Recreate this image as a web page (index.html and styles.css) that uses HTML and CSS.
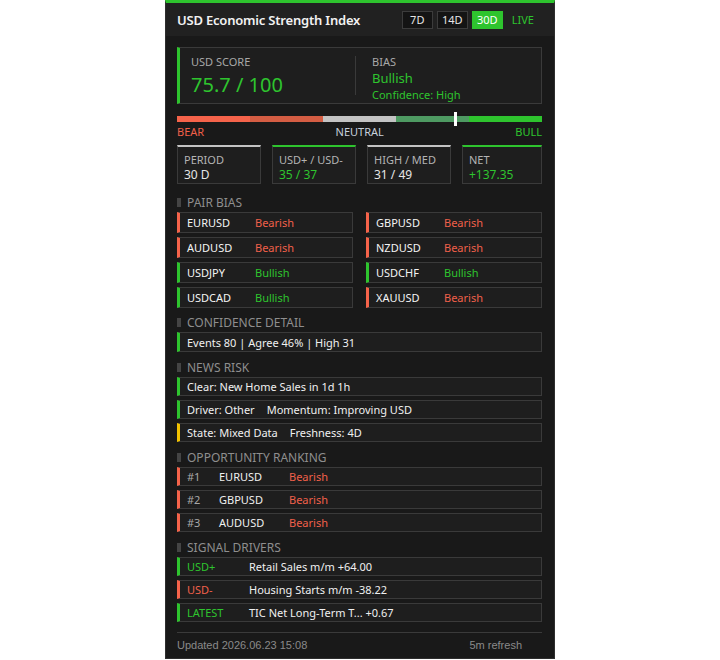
FILE: index.html
```html
<!DOCTYPE html>
<html lang="en">
<head>
    <meta charset="UTF-8">
    <meta name="viewport" content="width=device-width, initial-scale=1.0">
    <title>USD Economic Strength Index</title>
    <link rel="stylesheet" href="styles.css">
</head>
<body>
    <div class="panel">
        <div class="header">
            <div class="title">USD Economic Strength Index</div>
            <div class="tabs">
                <span class="tab">7D</span>
                <span class="tab">14D</span>
                <span class="tab active">30D</span>
                <span class="live">LIVE</span>
            </div>
        </div>

        <div class="content">
            <div class="score-box">
                <div class="score-left">
                    <div class="label">USD SCORE</div>
                    <div class="score">75.7 / 100</div>
                </div>
                <div class="divider"></div>
                <div class="score-right">
                    <div class="label">BIAS</div>
                    <div class="bias">Bullish</div>
                    <div class="conf">Confidence: High</div>
                </div>
            </div>

            <div class="meter">
                <div class="seg s1"></div>
                <div class="seg s2"></div>
                <div class="seg s3"></div>
                <div class="seg s4"></div>
                <div class="seg s5"></div>
                <div class="marker" style="left: 76%"></div>
            </div>
            <div class="meter-labels">
                <span class="red">BEAR</span>
                <span class="neutral">NEUTRAL</span>
                <span class="green">BULL</span>
            </div>

            <div class="stats">
                <div class="stat">
                    <div class="stat-label">PERIOD</div>
                    <div class="stat-value">30 D</div>
                </div>
                <div class="stat up">
                    <div class="stat-label">USD+ / USD-</div>
                    <div class="stat-value green">35 / 37</div>
                </div>
                <div class="stat">
                    <div class="stat-label">HIGH / MED</div>
                    <div class="stat-value">31 / 49</div>
                </div>
                <div class="stat up last">
                    <div class="stat-label">NET</div>
                    <div class="stat-value green">+137.35</div>
                </div>
            </div>

            <div class="section-title first">PAIR BIAS</div>
            <div class="pairs">
                <div class="row bear"><span class="pair">EURUSD</span><span class="red">Bearish</span></div>
                <div class="row bear"><span class="pair">GBPUSD</span><span class="red">Bearish</span></div>
                <div class="row bear"><span class="pair">AUDUSD</span><span class="red">Bearish</span></div>
                <div class="row bear"><span class="pair">NZDUSD</span><span class="red">Bearish</span></div>
                <div class="row bull"><span class="pair">USDJPY</span><span class="green">Bullish</span></div>
                <div class="row bull"><span class="pair">USDCHF</span><span class="green">Bullish</span></div>
                <div class="row bull"><span class="pair">USDCAD</span><span class="green">Bullish</span></div>
                <div class="row bear"><span class="pair">XAUUSD</span><span class="red">Bearish</span></div>
            </div>

            <div class="section-title tight">CONFIDENCE DETAIL</div>
            <div class="list">
                <div class="line bull tall">Events 80 | Agree 46% | High 31</div>
            </div>

            <div class="section-title">NEWS RISK</div>
            <div class="list">
                <div class="line bull">Clear: New Home Sales in 1d 1h</div>
                <div class="line bull">Driver: Other<span class="sp"></span>Momentum: Improving USD</div>
                <div class="line warn">State: Mixed Data<span class="sp"></span>Freshness: 4D</div>
            </div>

            <div class="section-title">OPPORTUNITY RANKING</div>
            <div class="list">
                <div class="line bear"><span class="rank">#1</span><span class="pair">EURUSD</span><span class="red">Bearish</span></div>
                <div class="line bear"><span class="rank">#2</span><span class="pair">GBPUSD</span><span class="red">Bearish</span></div>
                <div class="line bear"><span class="rank">#3</span><span class="pair">AUDUSD</span><span class="red">Bearish</span></div>
            </div>

            <div class="section-title">SIGNAL DRIVERS</div>
            <div class="list">
                <div class="line bull"><span class="tag green">USD+</span>Retail Sales m/m +64.00</div>
                <div class="line bear"><span class="tag red">USD-</span>Housing Starts m/m -38.22</div>
                <div class="line bull"><span class="tag green">LATEST</span>TIC Net Long-Term T... +0.67</div>
            </div>

            <div class="footer">
                <span>Updated 2026.06.23 15:08</span>
                <span>5m refresh</span>
            </div>
        </div>
    </div>
</body>
</html>
```

FILE: styles.css
```css
body {
    margin: 0;
    background-color: #ffffff;
    font-family: "Noto Sans", "Open Sans", sans-serif;
}

.panel {
    width: 388px;
    height: 655px;
    margin: 0 auto;
    background-color: #191919;
    border: 1px solid #2e2e2e;
    border-top: 3px solid #2ec42e;
    color: #e6e6e6;
}

.header {
    display: flex;
    align-items: center;
    justify-content: space-between;
    height: 33px;
    padding: 0 20px 0 11px;
    background-color: #212121;
}

.title {
    font-size: 13px;
    font-weight: 600;
    letter-spacing: -0.2px;
    color: #f2f2f2;
}

.tabs {
    display: flex;
    align-items: center;
    gap: 4px;
}

.tab {
    display: flex;
    align-items: center;
    justify-content: center;
    width: 29px;
    height: 16px;
    border: 1px solid #3c3c3c;
    background-color: #141414;
    font-size: 11px;
    color: #e6e6e6;
}

.tab.active {
    background-color: #2ec42e;
    border-color: #2ec42e;
    color: #ffffff;
}

.live {
    margin-left: 5px;
    font-size: 11px;
    color: #2ec42e;
}

.content {
    padding: 11px 12px 0 11px;
}

.score-box {
    display: flex;
    align-items: flex-start;
    height: 48px;
    padding-top: 7px;
    border: 1px solid #3a3a3a;
    border-left: 3px solid #2ec42e;
    background-color: #1e1e1e;
}

.score-left {
    width: 164px;
    padding-left: 11px;
}

.label {
    font-size: 11px;
    color: #a8a8a8;
    line-height: 14px;
}

.score {
    font-size: 20px;
    line-height: 32px;
    color: #2ec42e;
}

.divider {
    width: 1px;
    height: 39px;
    margin-top: 1px;
    background-color: #3a3a3a;
}

.score-right {
    padding-left: 16px;
}

.bias {
    font-size: 13px;
    line-height: 18px;
    color: #2ec42e;
}

.conf {
    font-size: 11px;
    line-height: 16px;
    color: #2ec42e;
}

.meter {
    position: relative;
    display: flex;
    height: 6px;
    margin-top: 12px;
}

.seg {
    flex: 1;
}

.s1 { background-color: #f5634a; }
.s2 { background-color: #d45d43; }
.s3 { background-color: #c3c3c3; }
.s4 { background-color: #4e9a62; }
.s5 { background-color: #2ec42e; }

.marker {
    position: absolute;
    top: -4px;
    width: 3px;
    height: 14px;
    background-color: #ffffff;
}

.meter-labels {
    display: flex;
    justify-content: space-between;
    height: 19px;
    font-size: 11px;
    line-height: 19px;
}

.neutral {
    color: #c8d0dc;
}

.red {
    color: #f0604a;
}

.green {
    color: #2ec42e;
}

.stats {
    display: flex;
    gap: 11px;
    margin-top: 4px;
}

.stat {
    width: 76px;
    height: 31px;
    padding: 5px 0 0 6px;
    border: 1px solid #3a3a3a;
    border-top: 2px solid #c3c3c3;
    background-color: #1e1e1e;
}

.stat.up {
    border-top-color: #2ec42e;
}

.stat.last {
    flex: 1;
}

.stat-label {
    font-size: 11px;
    line-height: 15px;
    color: #b4b4b4;
}

.stat-value {
    font-size: 12px;
    line-height: 16px;
    color: #e6e6e6;
}

.stat-value.green {
    color: #2ec42e;
}

.section-title {
    display: flex;
    align-items: center;
    height: 19px;
    margin-top: 6px;
    font-size: 12px;
    color: #8e8e8e;
}

.section-title.first {
    margin-top: 9px;
}

.section-title.tight {
    margin-top: 5px;
}

.section-title::before {
    content: "";
    width: 4px;
    height: 9px;
    margin-right: 6px;
    background-color: #444444;
}

.pairs {
    display: grid;
    grid-template-columns: 1fr 1fr;
    column-gap: 13px;
    row-gap: 4px;
}

.list {
    display: flex;
    flex-direction: column;
    gap: 4px;
}

.row,
.line {
    display: flex;
    align-items: center;
    border: 1px solid #3a3a3a;
    border-left: 3px solid #444444;
    background-color: #1e1e1e;
    font-size: 11px;
}

.row {
    height: 19px;
    padding-left: 7px;
}

.line {
    height: 17px;
    padding-left: 7px;
    color: #f0f0f0;
}

.line.tall {
    height: 18px;
}

.bear { border-left-color: #f5634a; }
.bull { border-left-color: #2ec42e; }
.warn { border-left-color: #f2c200; }

.row .pair {
    width: 68px;
    color: #f4f4f4;
}

.sp {
    display: inline-block;
    width: 12px;
}

.rank {
    width: 32px;
    color: #a8a8a8;
}

.line .pair {
    width: 70px;
}

.tag {
    width: 62px;
}

.footer {
    display: flex;
    justify-content: space-between;
    margin-top: 10px;
    padding: 4px 20px 0 0;
    border-top: 1px solid #3a3a3a;
    font-family: "Liberation Sans", Arial, sans-serif;
    font-size: 11px;
    line-height: 16px;
    color: #8a8a8a;
}
```
